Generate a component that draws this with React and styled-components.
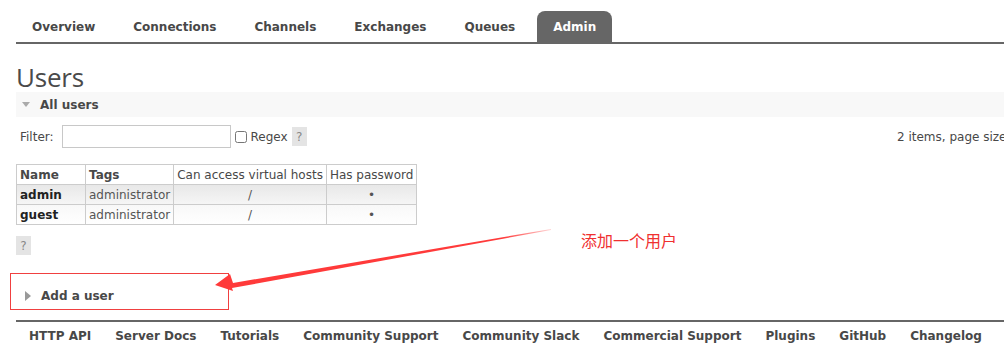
import React from "react";
import styled, { createGlobalStyle } from "styled-components";

const Global = createGlobalStyle`
  html, body { margin: 0; padding: 0; background: #fff; }
  body {
    width: 1004px; height: 350px; overflow: hidden;
    font-family: "DejaVu Sans", Verdana, sans-serif;
    font-size: 12px; color: #484848;
  }
`;

const Page = styled.div`
  position: relative;
  padding: 11px 0 0 16px;
  height: 339px;
`;

const Nav = styled.ul`
  display: flex; gap: 6px;
  margin: 0; padding: 0; list-style: none;
  border-bottom: 2px solid #666;
`;

const Tab = styled.li`
  height: 30px; line-height: 30px; padding: 1px 16px 0;
  font-weight: bold; font-size: 12px;
  color: ${(p) => (p.$active ? "#fff" : "#484848")};
  background: ${(p) => (p.$active ? "#666" : "transparent")};
  border-radius: 8px 8px 0 0;
`;

const Title = styled.h1`
  margin: 18px 0 0 0;
  font-family: "Open Sans", "DejaVu Sans", sans-serif;
  font-weight: 400; font-size: 26px; line-height: 30px;
  color: #4a4a4a; letter-spacing: -0.2px;
`;

const SectionHead = styled.div`
  display: flex; align-items: center; gap: 10px;
  height: 25px; padding-left: 6px;
  background: ${(p) => (p.$plain ? "transparent" : "#f8f8f8")};
  font-weight: bold; font-size: 12px; color: #484848;
`;

const TriDown = styled.span`
  width: 0; height: 0;
  border-left: 4.5px solid transparent; border-right: 4.5px solid transparent;
  border-top: 5px solid #aaa;
`;

const TriRight = styled.span`
  width: 0; height: 0;
  border-top: 5px solid transparent; border-bottom: 5px solid transparent;
  border-left: 6px solid #999;
`;

const FilterRow = styled.div`
  display: flex; align-items: center; justify-content: space-between;
  margin-top: 8px; padding-left: 4px; height: 23px;
`;

const FilterLeft = styled.div`
  display: flex; align-items: center;
`;

const Input = styled.input`
  box-sizing: border-box; width: 169px; height: 23px;
  margin: 0 4px 0 8px; border: 1px solid #c8c8c8; outline: none;
`;

const Check = styled.input`
  width: 12px; height: 12px; margin: 0 4px 0 0;
`;

const Help = styled.span`
  display: inline-flex; align-items: center; justify-content: center;
  width: 15px; height: 19px; background: #e4e4e4; color: #888;
  margin-left: ${(p) => p.$ml || 0}px; font-size: 12px;
`;

const RightInfo = styled.div`
  width: 107px; white-space: nowrap;
`;

const Table = styled.table`
  margin-top: 16px; border-collapse: collapse;
`;

const Th = styled.th`
  border: 1px solid #ccc; height: 19px; padding: 0 3px;
  text-align: left; font-weight: ${(p) => (p.$bold ? "bold" : "normal")};
  white-space: nowrap; background: #fff;
  min-width: ${(p) => p.$min || 0}px;
`;

const Row = styled.tr`
  background: ${(p) =>
    p.$alt ? "linear-gradient(#f8f8f8, #fff)" : "linear-gradient(#e8e8e8, #f6f6f6)"};
`;

const Td = styled.td`
  border: 1px solid #ccc; height: 19px; padding: 0 3px;
  text-align: ${(p) => (p.$center ? "center" : "left")};
  font-weight: ${(p) => (p.$bold ? "bold" : "normal")};
  color: ${(p) => (p.$bold ? "#222" : "#555")};
  white-space: nowrap;
`;

const HelpBlock = styled.div`
  margin-top: 11px;
`;

const AddSection = styled.div`
  margin-top: 28px; padding-left: 3px;
  height: 25px;
`;

const Footer = styled.ul`
  display: flex; margin: 12px 0 0 0; padding: 6px 0 0 0; list-style: none;
  border-top: 2px solid #666;
`;

const FootLink = styled.li`
  padding: 0 12px 0 ${(p) => (p.$first ? 13 : 12)}px;
  font-weight: bold; font-size: 12px; color: #484848;
  white-space: nowrap; line-height: 16px;
`;

const Box = styled.div`
  position: absolute; left: 10px; top: 273px;
  width: 217px; height: 35px; border: 1px solid #f04040;
`;

const Note = styled.div`
  position: absolute; left: 581px; top: 228px;
  font-family: "Noto Sans CJK SC", sans-serif; font-size: 16px; color: #f03030;
`;

const Arrow = styled.svg`
  position: absolute; left: 0; top: 0; pointer-events: none;
`;

const tabs = ["Overview", "Connections", "Channels", "Exchanges", "Queues", "Admin"];
const links = ["HTTP API", "Server Docs", "Tutorials", "Community Support", "Community Slack", "Commercial Support", "Plugins", "GitHub", "Changelog"];

export default function App() {
  return (
    <>
      <Global />
      <Page>
        <Nav>
          {tabs.map((t) => (
            <Tab key={t} $active={t === "Admin"}>{t}</Tab>
          ))}
        </Nav>
        <Title>Users</Title>
        <SectionHead><TriDown />All users</SectionHead>
        <FilterRow>
          <FilterLeft>
            Filter:
            <Input />
            <Check type="checkbox" />
            Regex
            <Help $ml={4}>?</Help>
          </FilterLeft>
          <RightInfo>2 items, page size up to:</RightInfo>
        </FilterRow>
        <Table>
          <thead>
            <tr>
              <Th $bold $min={62}>Name</Th>
              <Th $bold>Tags</Th>
              <Th>Can access virtual hosts</Th>
              <Th>Has password</Th>
            </tr>
          </thead>
          <tbody>
            <Row>
              <Td $bold>admin</Td><Td>administrator</Td><Td $center>/</Td><Td $center>•</Td>
            </Row>
            <Row $alt>
              <Td $bold>guest</Td><Td>administrator</Td><Td $center>/</Td><Td $center>•</Td>
            </Row>
          </tbody>
        </Table>
        <HelpBlock><Help>?</Help></HelpBlock>
        <AddSection>
          <SectionHead $plain><TriRight />Add a user</SectionHead>
        </AddSection>
        <Footer>
          {links.map((l, i) => (
            <FootLink key={l} $first={i === 0}>{l}</FootLink>
          ))}
        </Footer>
        <Box />
        <Note>添加一个用户</Note>
        <Arrow width="1004" height="350" viewBox="0 0 1004 350">
          <defs>
            <linearGradient id="fade" x1="551" y1="229" x2="232" y2="286" gradientUnits="userSpaceOnUse">
              <stop offset="0" stopColor="#ff3a3a" stopOpacity="0.2" />
              <stop offset="0.15" stopColor="#ff3a3a" stopOpacity="1" />
              <stop offset="1" stopColor="#ff3a3a" />
            </linearGradient>
          </defs>
          <polygon
            points="551,229 233,283 230,274 215,285 233,291 232,288 551,230"
            fill="url(#fade)"
          />
        </Arrow>
      </Page>
    </>
  );
}
